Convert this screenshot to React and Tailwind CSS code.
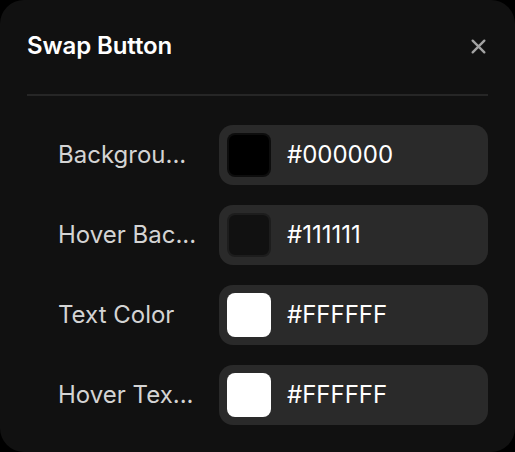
import React from "react";

const rows = [
  { label: "Backgrou...", full: "Background", color: "#000000", text: "#000000" },
  { label: "Hover Bac...", full: "Hover Background", color: "#111111", text: "#111111" },
  { label: "Text Color", full: "Text Color", color: "#FFFFFF", text: "#FFFFFF" },
  { label: "Hover Tex...", full: "Hover Text Color", color: "#FFFFFF", text: "#FFFFFF" },
];

export default function App() {
  return (
    <div className="w-[515px] h-[452px] bg-black" style={{ fontFamily: "Inter, 'Liberation Sans', sans-serif" }}>
      <div className="w-full h-full bg-[#111111] rounded-[24px] px-[27px] pt-[30px]">
        <div className="flex items-center justify-between h-[32px]">
          <h2 className="text-[24px] font-semibold text-white tracking-[-0.1px]">Swap Button</h2>
          <button className="w-[20px] h-[20px] flex items-center justify-center text-[#a3a3a3]">
            <svg width="17" height="17" viewBox="0 0 16 16" fill="none" stroke="currentColor" strokeWidth="2.2" strokeLinecap="round">
              <path d="M2.5 2.5L13.5 13.5M13.5 2.5L2.5 13.5" />
            </svg>
          </button>
        </div>
        <div className="mt-[32px] h-[2px] bg-[#262626]" />
        <div className="mt-[29px] flex flex-col gap-[20px] pl-[31px]">
          {rows.map((r) => (
            <div key={r.full} className="flex items-center gap-[16px]">
              <div title={r.full} className="w-[145px] whitespace-nowrap text-[24px] leading-[32px] text-[#d4d4d4]">{r.label}</div>
              <div className="flex-1 h-[60px] rounded-[14px] bg-[#2a2a2a] flex items-center pl-[8px]">
                <div
                  className="w-[44px] h-[44px] rounded-[8px] border-2 border-white/5"
                  style={{ backgroundColor: r.color }}
                />
                <span className="ml-[16px] text-[24px] text-white">{r.text}</span>
              </div>
            </div>
          ))}
        </div>
      </div>
    </div>
  );
}
